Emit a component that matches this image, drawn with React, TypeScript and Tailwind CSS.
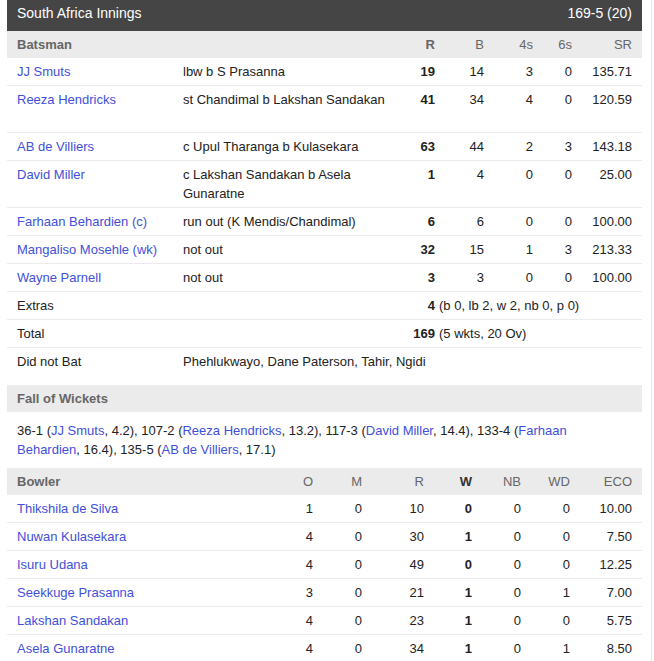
import React from 'react';

const batCols = 'grid grid-cols-[166px_223px_49px_49px_49px_39px_60px]';
const bowlCols = 'grid grid-cols-[267px_49px_49px_62px_48px_49px_49px_62px]';
const link = 'text-[#3f50d9]';

const batsmen = [
    { name: 'JJ Smuts', how: 'lbw b S Prasanna', r: 19, b: 14, f: 3, s: 0, sr: '135.71' },
    { name: 'Reeza Hendricks', how: 'st Chandimal b Lakshan Sandakan', r: 41, b: 34, f: 4, s: 0, sr: '120.59', tall: true },
    { name: 'AB de Villiers', how: 'c Upul Tharanga b Kulasekara', r: 63, b: 44, f: 2, s: 3, sr: '143.18' },
    { name: 'David Miller', how: 'c Lakshan Sandakan b Asela Gunaratne', r: 1, b: 4, f: 0, s: 0, sr: '25.00' },
    { name: 'Farhaan Behardien (c)', how: 'run out (K Mendis/Chandimal)', r: 6, b: 6, f: 0, s: 0, sr: '100.00' },
    { name: 'Mangaliso Mosehle (wk)', how: 'not out', r: 32, b: 15, f: 1, s: 3, sr: '213.33' },
    { name: 'Wayne Parnell', how: 'not out', r: 3, b: 3, f: 0, s: 0, sr: '100.00' },
];

const bowlers = [
    { name: 'Thikshila de Silva', o: 1, m: 0, r: 10, w: 0, nb: 0, wd: 0, eco: '10.00' },
    { name: 'Nuwan Kulasekara', o: 4, m: 0, r: 30, w: 1, nb: 0, wd: 0, eco: '7.50' },
    { name: 'Isuru Udana', o: 4, m: 0, r: 49, w: 0, nb: 0, wd: 0, eco: '12.25' },
    { name: 'Seekkuge Prasanna', o: 3, m: 0, r: 21, w: 1, nb: 0, wd: 1, eco: '7.00' },
    { name: 'Lakshan Sandakan', o: 4, m: 0, r: 23, w: 1, nb: 0, wd: 0, eco: '5.75' },
    { name: 'Asela Gunaratne', o: 4, m: 0, r: 34, w: 1, nb: 0, wd: 1, eco: '8.50' },
];

export default function App() {
    return (
        <div className="flex w-[654px] h-[661px] overflow-hidden bg-white text-[13px] leading-[19px] text-[#222] font-['Liberation_Sans',Arial,sans-serif]">
            <div className="ml-[7px] w-[635px] shrink-0">
                {/* Innings header */}
                <div className="h-[31px] pt-[4px] px-[10px] flex justify-between bg-[#454545] text-white text-[14px]">
                    <span>South Africa Innings</span>
                    <span>169-5 (20)</span>
                </div>

                {/* Batting */}
                <div className={`${batCols} bg-[#ebebeb] py-[4px] text-[#666]`}>
                    <div className="pl-[10px] font-bold">Batsman</div>
                    <div />
                    <div className="pr-[10px] text-right font-bold">R</div>
                    <div className="pr-[10px] text-right">B</div>
                    <div className="pr-[10px] text-right">4s</div>
                    <div className="pr-[10px] text-right">6s</div>
                    <div className="pr-[10px] text-right">SR</div>
                </div>
                {batsmen.map((p) => (
                    <div key={p.name} className={`${batCols} py-[4px] border-b border-[#ebebeb]`}>
                        <div className={`pl-[10px] ${link}`}>{p.name}</div>
                        <div className="pl-[10px] pr-[10px]">
                            {p.how}
                            {p.tall && <div>&nbsp;</div>}
                        </div>
                        <div className="pr-[10px] text-right font-bold">{p.r}</div>
                        <div className="pr-[10px] text-right">{p.b}</div>
                        <div className="pr-[10px] text-right">{p.f}</div>
                        <div className="pr-[10px] text-right">{p.s}</div>
                        <div className="pr-[10px] text-right">{p.sr}</div>
                    </div>
                ))}
                <div className="flex py-[4px] border-b border-[#ebebeb]">
                    <div className="w-[166px] pl-[10px]">Extras</div>
                    <div className="w-[262px] text-right font-bold">4</div>
                    <div className="pl-[4px]">(b 0, lb 2, w 2, nb 0, p 0)</div>
                </div>
                <div className="flex py-[4px] border-b border-[#ebebeb]">
                    <div className="w-[166px] pl-[10px]">Total</div>
                    <div className="w-[262px] text-right font-bold">169</div>
                    <div className="pl-[4px]">(5 wkts, 20 Ov)</div>
                </div>
                <div className="flex py-[4px]">
                    <div className="w-[166px] pl-[10px]">Did not Bat</div>
                    <div className="pl-[10px]">Phehlukwayo, Dane Paterson, Tahir, Ngidi</div>
                </div>

                {/* Fall of wickets */}
                <div className="mt-[10px] py-[4px] pl-[10px] bg-[#ebebeb] text-[#666] font-bold">Fall of Wickets</div>
                <p className="pt-[9px] pb-[9px] px-[10px]">
                    36-1 (<span className={link}>JJ Smuts</span>, 4.2), 107-2 (<span className={link}>Reeza Hendricks</span>, 13.2), 117-3 (<span className={link}>David Miller</span>, 14.4), 133-4 (<span className={link}>Farhaan Behardien</span>, 16.4), 135-5 (<span className={link}>AB de Villiers</span>, 17.1)
                </p>

                {/* Bowling */}
                <div className={`${bowlCols} bg-[#ebebeb] py-[4px] text-[#666]`}>
                    <div className="pl-[10px] font-bold">Bowler</div>
                    <div className="pr-[10px] text-right">O</div>
                    <div className="pr-[10px] text-right">M</div>
                    <div className="pr-[10px] text-right">R</div>
                    <div className="pr-[10px] text-right font-bold text-[#333]">W</div>
                    <div className="pr-[10px] text-right">NB</div>
                    <div className="pr-[10px] text-right">WD</div>
                    <div className="pr-[10px] text-right">ECO</div>
                </div>
                {bowlers.map((b) => (
                    <div key={b.name} className={`${bowlCols} py-[4px] border-b border-[#ebebeb]`}>
                        <div className={`pl-[10px] ${link}`}>{b.name}</div>
                        <div className="pr-[10px] text-right">{b.o}</div>
                        <div className="pr-[10px] text-right">{b.m}</div>
                        <div className="pr-[10px] text-right">{b.r}</div>
                        <div className="pr-[10px] text-right font-bold">{b.w}</div>
                        <div className="pr-[10px] text-right">{b.nb}</div>
                        <div className="pr-[10px] text-right">{b.wd}</div>
                        <div className="pr-[10px] text-right">{b.eco}</div>
                    </div>
                ))}
            </div>
            <div className="ml-[9px] w-px bg-[#e6e6e6]" />
        </div>
    );
}
